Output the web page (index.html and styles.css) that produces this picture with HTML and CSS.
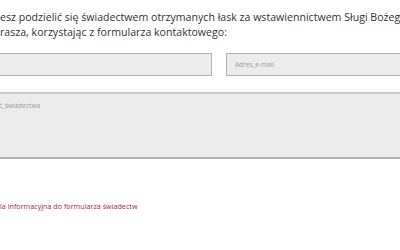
FILE: index.html
```html
<!DOCTYPE html>
<html lang="pl">
<head>
<meta charset="utf-8">
<link rel="stylesheet" href="styles.css">
</head>
<body>
<div class="page">
  <p class="intro">esz podzielić się świadectwem otrzymanych łask za wstawiennictwem Sługi Bożego<br>rasza, korzystając z formularza kontaktowego:</p>
  <form class="form">
    <div class="row">
      <input class="field field-name" type="text">
      <input class="field field-mail" type="email" placeholder="Adres_e-mail">
    </div>
    <textarea class="field area" placeholder="ć_świadectwa"></textarea>
  </form>
  <a class="link" href="#">la informacyjna do formularza świadectw</a>
</div>
</body>
</html>
```
FILE: styles.css
```css
html, body {
  margin: 0;
  padding: 0;
  background: #fff;
  overflow: hidden;
}
.page {
  width: 400px;
  height: 250px;
  overflow: hidden;
  font-family: "Open Sans", sans-serif;
  color: #333;
}
.intro {
  margin: 0;
  padding-top: 10px;
  font-size: 10.6px;
  line-height: 15px;
  white-space: nowrap;
}
.form {
  margin-top: 13px;
  display: flex;
  flex-direction: column;
  gap: 16px;
}
.row {
  display: flex;
  gap: 14px;
  margin-left: -100px;
}
.field {
  box-sizing: border-box;
  flex-shrink: 0;
  background: #ececec;
  border: 1px solid #b3b3b3;
  font-family: "Open Sans", sans-serif;
  font-size: 6.5px;
  color: #555;
  outline: none;
  margin: 0;
  border-radius: 0;
}
.field::placeholder {
  color: #9a9a9a;
  opacity: 1;
}
.field-name {
  width: 312px;
  height: 23px;
}
.field-mail {
  width: 260px;
  height: 23px;
  padding-left: 8px;
}
.area {
  display: block;
  width: 420px;
  height: 67px;
  margin-left: -1px;
  padding: 7px 8px 8px 0;
  resize: none;
  border-top: 2px solid #cdcdcd;
  border-bottom: 2px solid #b3b3b3;
  border-left: none;
  border-right: none;
}
.link {
  display: block;
  margin-top: 41px;
  font-size: 7.2px;
  line-height: 12px;
  color: #9b2d42;
  text-decoration: none;
  white-space: nowrap;
}
```
